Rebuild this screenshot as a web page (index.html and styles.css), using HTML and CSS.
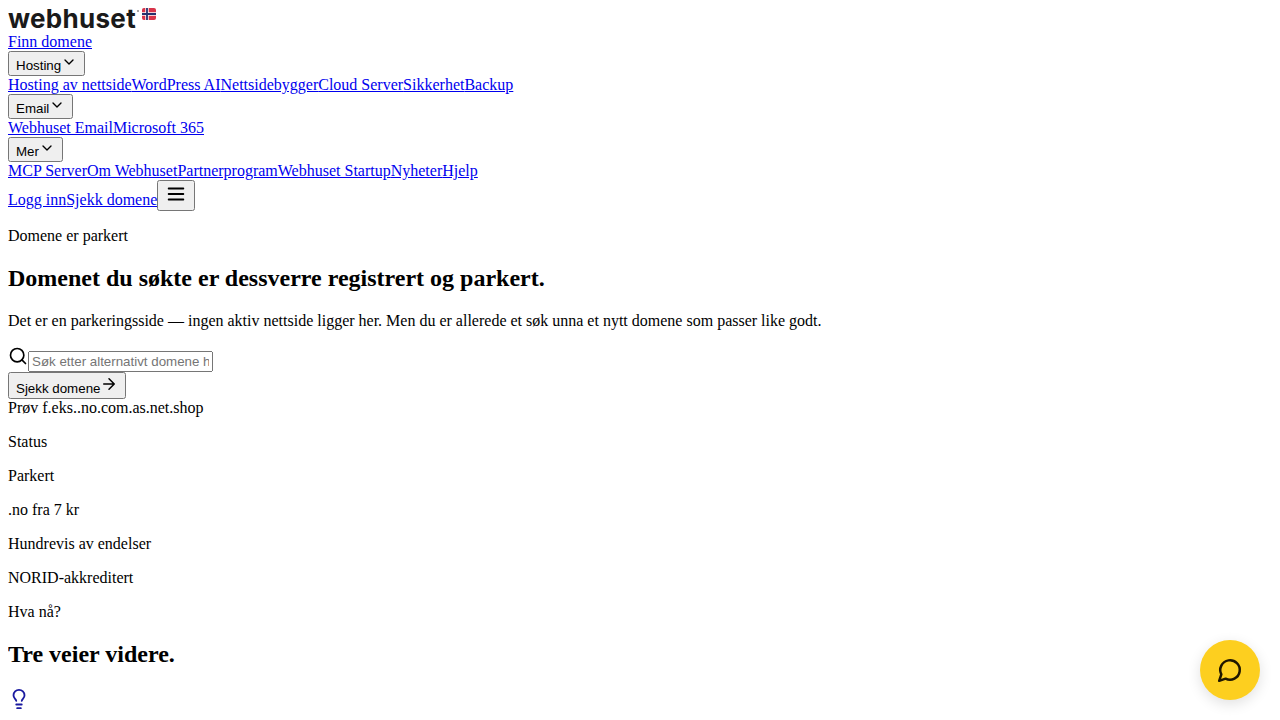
FILE: index.html
```html
<!DOCTYPE html>
<html lang="nb">

<head>
  <meta charset="UTF-8" />
  <meta name="viewport" content="width=device-width, initial-scale=1.0" />
  <title>Domene er parkert</title>
  <link rel="stylesheet" href="styles.css">
</head>

<body>
  <header>
    <a class="logo" href="#">
      <span class="logo-text">webhuset</span>
      <span class="logo-mark"></span>
      <svg class="flag" viewBox="0 0 14 12" width="14" height="12" aria-hidden="true">
        <rect width="14" height="12" rx="2" fill="#d8344a" />
        <path d="M0 6h14M5 0v12" stroke="#fff" stroke-width="3.4" />
        <path d="M0 6h14M5 0v12" stroke="#24306e" stroke-width="1.8" />
      </svg>
    </a>
    <div><a href="#">Finn domene</a></div>
    <div>
      <button>Hosting<svg class="icon chevron" viewBox="0 0 24 24"><path d="m6 9 6 6 6-6" /></svg></button>
      <div class="links"><a href="#">Hosting av nettside</a><a href="#">WordPress AI</a><a href="#">Nettsidebygger</a><a href="#">Cloud Server</a><a href="#">Sikkerhet</a><a href="#">Backup</a></div>
    </div>
    <div>
      <button>Email<svg class="icon chevron" viewBox="0 0 24 24"><path d="m6 9 6 6 6-6" /></svg></button>
      <div class="links"><a href="#">Webhuset Email</a><a href="#">Microsoft 365</a></div>
    </div>
    <div>
      <button>Mer<svg class="icon chevron" viewBox="0 0 24 24"><path d="m6 9 6 6 6-6" /></svg></button>
      <div class="links"><a href="#">MCP Server</a><a href="#">Om Webhuset</a><a href="#">Partnerprogram</a><a href="#">Webhuset Startup</a><a href="#">Nyheter</a><a href="#">Hjelp</a></div>
    </div>
    <div><a href="#">Logg inn</a><a href="#">Sjekk domene</a><button class="menu-btn"><svg class="icon menu" viewBox="0 0 24 24"><path d="M4 6h16M4 12h16M4 18h16" /></svg></button></div>
  </header>

  <main>
    <p>Domene er parkert</p>
    <h2>Domenet du søkte er dessverre registrert og parkert.</h2>
    <p>Det er en parkeringsside — ingen aktiv nettside ligger her. Men du er allerede et søk unna et nytt domene som passer like godt.</p>

    <form>
      <svg class="icon search" viewBox="0 0 24 24"><circle cx="11" cy="11" r="8" /><path d="m21 21-4.3-4.3" /></svg><input class="search-input" type="text" placeholder="Søk etter alternativt domene her" />
      <div><button type="button">Sjekk domene<svg class="icon arrow" viewBox="0 0 24 24"><path d="M5 12h14M12 5l7 7-7 7" /></svg></button></div>
      <div><span>Prøv f.eks.</span><span>.no</span><span>.com</span><span>.as</span><span>.net</span><span>.shop</span></div>
    </form>

    <p>Status</p>
    <p>Parkert</p>
    <p>.no fra 7 kr</p>
    <p>Hundrevis av endelser</p>
    <p>NORID-akkreditert</p>
    <p>Hva nå?</p>
    <h2>Tre veier videre.</h2>
    <svg class="icon bulb" viewBox="0 0 24 24">
      <path d="M15 14c.2-1 .7-1.7 1.5-2.5 1-.9 1.5-2.2 1.5-3.5A6 6 0 0 0 6 8c0 1 .2 2.2 1.5 3.5.7.7 1.3 1.5 1.5 2.5M9 18h6M10 22h4" />
    </svg>
  </main>

  <button class="chat-btn" aria-label="Chat">
    <svg class="icon chat" viewBox="0 0 24 24"><path d="M7.9 20A9 9 0 1 0 4 16.1L2 22Z" /></svg>
  </button>
</body>

</html>
```

FILE: styles.css
```css
body {
  font-family: "Liberation Serif", serif;
  overflow: hidden;
}

button,
input {
  font-family: "Liberation Sans", sans-serif;
}

.icon {
  fill: none;
  stroke: currentColor;
  stroke-width: 2;
  stroke-linecap: round;
  stroke-linejoin: round;
}

.logo {
  display: flex;
  align-items: flex-start;
  height: 25px;
  text-decoration: none;
  color: #1a1a1a;
}

.logo-text {
  font-family: Inter, sans-serif;
  font-size: 26px;
  font-weight: 700;
  line-height: 22px;
  letter-spacing: 0.3px;
}

.logo-mark {
  width: 2px;
  height: 2px;
  margin: 2px 0 0 1px;
  border-radius: 50%;
  background-color: #8a8a8a;
}

.flag {
  margin-left: 3px;
}

.chevron {
  width: 16px;
  height: 16px;
}

.menu {
  width: 22px;
  height: 22px;
}

.search {
  width: 20px;
  height: 20px;
}

.search-input {
  width: 177px;
}

.arrow {
  width: 18px;
  height: 18px;
}

.bulb {
  display: block;
  width: 22px;
  height: 22px;
  color: #1a1aa0;
}

.chat-btn {
  position: fixed;
  right: 20px;
  bottom: 20px;
  width: 60px;
  height: 60px;
  padding: 0;
  display: flex;
  align-items: center;
  justify-content: center;
  border: none;
  border-radius: 50%;
  background-color: #fdcf1f;
  color: #1f1600;
  box-shadow: 0 4px 14px rgba(0, 0, 0, 0.12);
}

.chat {
  width: 26px;
  height: 26px;
  stroke-width: 2.3;
}
```
